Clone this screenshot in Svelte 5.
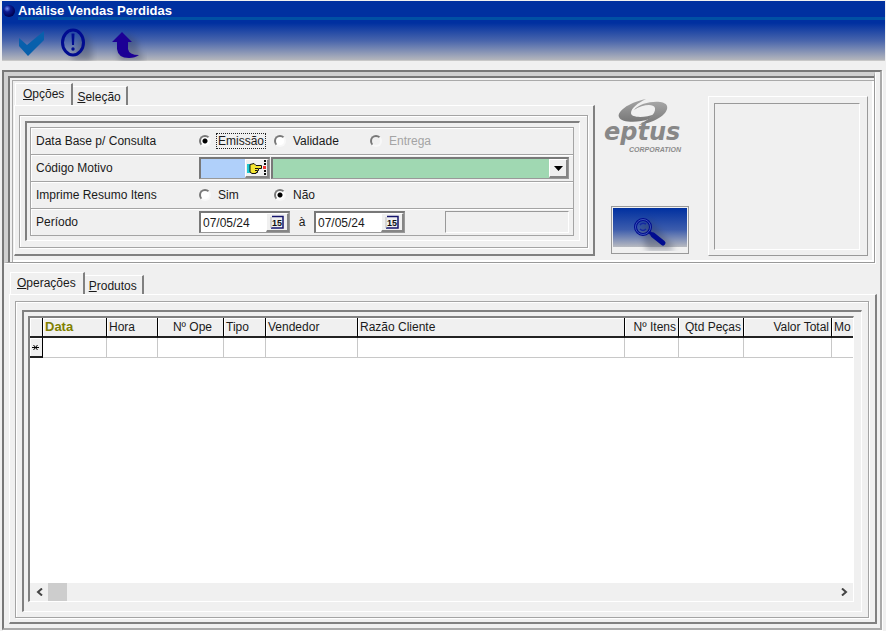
<script lang="ts">
  let dateBase = $state("emissao");
  let resumo = $state("nao");
  let codigo = $state("");
  let dateFrom = $state("07/05/24");
  let dateTo = $state("07/05/24");

  const columns = [
    { label: "Data", width: 64, sorted: true },
    { label: "Hora", width: 51 },
    { label: "Nº Ope", width: 66, right: true, pad: true },
    { label: "Tipo", width: 42 },
    { label: "Vendedor", width: 92 },
    { label: "Razão Cliente", width: 267 },
    { label: "Nº Itens", width: 54, right: true },
    { label: "Qtd Peças", width: 65, right: true },
    { label: "Valor Total", width: 88, right: true },
    { label: "Mo", width: 0 },
  ];
</script>

{#snippet calendar()}
  <svg width="14" height="14" viewBox="0 0 14 14" aria-hidden="true">
    <path d="M2 1.5H13V13H1" fill="none" stroke="#15156c" stroke-width="1.5" />
    <path d="M1 2V13" stroke="#bbb" />
    <text x="2" y="10.5" class="cal-text">15</text>
  </svg>
{/snippet}

<div class="page">
  <header>
    <div class="title-bar">
      <svg width="14" height="16" viewBox="0 0 14 16" aria-hidden="true">
        <defs>
          <radialGradient id="ball" cx="35%" cy="30%" r="70%">
            <stop offset="0" stop-color="#6e8cf0" />
            <stop offset="0.4" stop-color="#0a1a90" />
            <stop offset="1" stop-color="#000050" />
          </radialGradient>
        </defs>
        <circle cx="7" cy="10" r="6" fill="url(#ball)" />
      </svg>
      <h1>Análise Vendas Perdidas</h1>
    </div>
    <div class="toolbar">
      <button type="button" aria-label="Confirmar">
        <svg width="30" height="34" viewBox="0 0 30 34">
          <path d="M4 11L12 18L29 4V13L13 29L4 19Z" fill="#0860ac" />
        </svg>
      </button>
      <button type="button" aria-label="Informações">
        <svg width="38" height="34" viewBox="0 0 38 34">
          <path d="M12 34L24 6Q34 12 33 34Z" class="shade" />
          <ellipse cx="14" cy="15.5" rx="10.5" ry="12.5" fill="none" stroke="#000c90" stroke-width="3" />
          <path d="M12.5 6.5H15.5L15 18H13Z" fill="#000c90" />
          <circle cx="14" cy="22" r="1.7" fill="#000c90" />
        </svg>
      </button>
      <button type="button" aria-label="Sair">
        <svg width="36" height="34" viewBox="0 0 36 34">
          <path d="M8 34V17L17 7L27 15V22Q30 28 34 34Z" class="shade" />
          <path d="M1 15L11 5L21 15H17V22Q18 28 28 28Q24 31 18 31Q7 31 6 22V15Z" fill="#1c0095" />
        </svg>
      </button>
    </div>
  </header>

  <main>
    <section class="top-panel">
      <div class="options">
        <div class="tabs" role="tablist">
          <button type="button" role="tab" class="tab active" aria-selected="true"><u>O</u>pções</button>
          <button type="button" role="tab" class="tab" aria-selected="false"><u>S</u>eleção</button>
        </div>
        <div class="sheet">
          <div class="ridge">
            <div class="well">
              <form class="rows">
                <div class="row" role="radiogroup" aria-labelledby="lbl-base">
                  <span class="caption" id="lbl-base">Data Base p/ Consulta</span>
                  <label class="radio first">
                    <input type="radio" name="base" value="emissao" bind:group={dateBase} />
                    <span class="focus">Emissão</span>
                  </label>
                  <label class="radio second">
                    <input type="radio" name="base" value="validade" bind:group={dateBase} />
                    <span>Validade</span>
                  </label>
                  <label class="radio disabled">
                    <input type="radio" name="base" value="entrega" bind:group={dateBase} disabled />
                    <span>Entrega</span>
                  </label>
                </div>
                <div class="row">
                  <label class="caption" for="codigo">Código Motivo</label>
                  <div class="field code">
                    <input id="codigo" type="text" bind:value={codigo} />
                    <button type="button" aria-label="Procurar motivo">
                      <svg width="21" height="16" viewBox="0 0 21 16">
                        <path d="M1 4H4V13H1Z" fill="#20c8d0" />
                        <path d="M4 4.5L8 3.5L10 5.5H15.5V8.500H12.5V10.5H11.5V12.5H10V13.5H6L4 12Z" fill="#f4e430" stroke="#111" />
                        <path d="M9 8.5H12M9 10.5H11" stroke="#111" />
                        <path d="M18 0H20V2H18ZM18 3H20V5H18ZM18 10H20V12H18ZM18 13H20V15H18Z" fill="#111" />
                        <path d="M17 6H20V9H17Z" fill="#e33" />
                      </svg>
                    </button>
                  </div>
                  <div class="field combo">
                    <select aria-label="Descrição do motivo"><option></option></select>
                    <span class="drop" aria-hidden="true">
                      <svg width="9" height="5" viewBox="0 0 9 5"><path d="M0 0H9L4.5 5Z" fill="#000" /></svg>
                    </span>
                  </div>
                </div>
                <div class="row" role="radiogroup" aria-labelledby="lbl-resumo">
                  <span class="caption" id="lbl-resumo">Imprime Resumo Itens</span>
                  <label class="radio first">
                    <input type="radio" name="resumo" value="sim" bind:group={resumo} />
                    <span>Sim</span>
                  </label>
                  <label class="radio">
                    <input type="radio" name="resumo" value="nao" bind:group={resumo} />
                    <span>Não</span>
                  </label>
                </div>
                <div class="row">
                  <label class="caption" for="date-from">Período</label>
                  <div class="field date">
                    <input id="date-from" type="text" bind:value={dateFrom} />
                    <button type="button" aria-label="Calendário inicial">{@render calendar()}</button>
                  </div>
                  <label class="until" for="date-to">à</label>
                  <div class="field date">
                    <input id="date-to" type="text" bind:value={dateTo} />
                    <button type="button" aria-label="Calendário final">{@render calendar()}</button>
                  </div>
                  <div class="status"></div>
                </div>
              </form>
            </div>
          </div>
        </div>
      </div>

      <div class="brand">
        <svg width="88" height="58" viewBox="0 0 88 58" role="img" aria-label="eptus corporation">
          <defs>
            <linearGradient id="metal" x1="0" y1="0" x2="0" y2="1">
              <stop offset="0" stop-color="#a6a6a6" />
              <stop offset="1" stop-color="#777" />
            </linearGradient>
          </defs>
          <path d="M43 1C24 5 14 14 16 19C18 25 36 25 46 21L52 16C42 20 28 20 28 15C28 10 35 5 43 1Z" fill="url(#metal)" />
          <path d="M31 12C38 3 62 1 64 8C66 15 54 24 36 27C45 22 53 16 52 10C50 5 39 7 31 12Z" fill="url(#metal)" />
          <text x="1" y="42" class="logo-name">eptus</text>
          <text x="26" y="54" class="logo-sub">CORPORATION</text>
        </svg>
        <button type="button" class="search" aria-label="Pesquisar">
          <svg width="74" height="42" viewBox="0 0 74 42">
            <path d="M27 17L37 11L60 37V42H34Z" class="shade" />
            <circle cx="30" cy="18" r="7.5" fill="none" stroke="#000c90" stroke-width="3" />
            <circle cx="30" cy="18" r="7.5" fill="none" stroke="#3c55b8" stroke-width="1" />
            <path d="M27 16Q29 13 33 15M27 20Q30 23 33 20" fill="none" stroke="#1428a0" stroke-width="1.5" />
            <path d="M36 23L40 26" stroke="#000c90" stroke-width="3" />
            <path d="M40 26L50 34" stroke="#000c90" stroke-width="5" stroke-linecap="round" />
          </svg>
        </button>
      </div>

      <div class="preview"><div class="preview-inner"></div></div>
    </section>

    <section class="results">
      <div class="tabs" role="tablist">
        <button type="button" role="tab" class="tab active" aria-selected="true"><u>O</u>perações</button>
        <button type="button" role="tab" class="tab" aria-selected="false"><u>P</u>rodutos</button>
      </div>
      <div class="sheet">
        <div class="ridge">
          <div class="well">
            <div class="grid">
              <div class="table-area">
                <table>
                  <colgroup>
                    <col class="marker-col" />
                    {#each columns as column (column.label)}
                      <col style:width={column.width ? `${column.width}px` : null} />
                    {/each}
                  </colgroup>
                  <thead>
                    <tr>
                      <th></th>
                      {#each columns as column (column.label)}
                        <th scope="col" class:sorted={column.sorted} class:right={column.right} class:pad={column.pad}>
                          {column.label}
                        </th>
                      {/each}
                    </tr>
                  </thead>
                  <tbody>
                    <tr>
                      <th scope="row">
                        <svg width="7" height="7" viewBox="0 0 7 7" aria-label="Novo registro">
                          <path d="M0 3.5H7M1.5 1L5.5 6M5.5 1L1.5 6" stroke="#000" />
                        </svg>
                      </th>
                      {#each columns as column (column.label)}
                        <td></td>
                      {/each}
                    </tr>
                  </tbody>
                </table>
              </div>
              <div class="scrollbar">
                <button type="button" aria-label="Rolar à esquerda">
                  <svg width="7" height="8" viewBox="0 0 7 8"><path d="M6 0.5L2 4L6 7.5" /></svg>
                </button>
                <div class="thumb"></div>
                <button type="button" aria-label="Rolar à direita">
                  <svg width="7" height="8" viewBox="0 0 7 8"><path d="M1 0.5L5 4L1 7.5" /></svg>
                </button>
              </div>
            </div>
          </div>
        </div>
      </div>
    </section>
  </main>
</div>

<style>
  :global(body) {
    background: #f0f0f0;
  }
  .page,
  .page * {
    box-sizing: border-box;
  }
  .page {
    min-height: 100vh;
    padding: 1px 0 1px 2px;
    display: flex;
    flex-direction: column;
    font-family: "Liberation Sans", Arial, sans-serif;
    font-size: 12px;
    line-height: 16px;
    color: #1a1a1a;
  }
  button,
  input,
  select {
    margin: 0;
    padding: 0;
    border: none;
    border-radius: 0;
    background: transparent;
    font: inherit;
    color: inherit;
  }
  svg {
    display: block;
    flex-shrink: 0;
  }

  header {
    height: 60px;
    margin-right: 1px;
    background: linear-gradient(#0030a0 0, #0030a0 22px, #4a66ac 40px, #b4b6bc 100%);
    border-bottom: 1px solid #c8c8c8;
  }
  .title-bar {
    display: flex;
    gap: 2px;
    height: 19px;
  }
  h1 {
    flex: 1;
    margin: 0;
    height: 19px;
    font-size: 13px;
    line-height: 19px;
    font-weight: bold;
    color: #fff;
    border-bottom: 3px solid #0050a4;
  }
  .toolbar {
    display: flex;
    gap: 14px;
    padding: 7px 13px 0;
  }
  .shade {
    fill: #303850;
    opacity: 0.35;
    filter: blur(3px);
  }

  main {
    flex: 1;
    display: flex;
    flex-direction: column;
    margin: 9px 4px 0 0;
    border: 2px solid;
    border-color: #787878 #aaa #aaa #787878;
    box-shadow: 1px 1px 0 #fff;
  }

  .top-panel {
    display: flex;
    margin: 0 5px 0 0;
    padding: 7px 6px 6px 5px;
    border: solid;
    border-width: 4px 1px 1px 4px;
    border-color: #d0d0d0 #999 #999 #d0d0d0;
    box-shadow:
      1px 1px 0 #fff,
      inset 1px 1px 0 #777,
      inset 2px 2px 0 #777,
      inset 4px 4px 0 #f0f0f0,
      inset 5px 5px 0 #aaa,
      inset -2px -2px 0 #fff;
  }
  .options {
    flex: 1;
    min-width: 0;
    padding-left: 1px;
  }

  .tabs {
    display: flex;
    align-items: flex-end;
    height: 22px;
    padding-left: 1px;
  }
  .tab {
    height: 19px;
    padding: 2px 5px 0 4px;
    border-right: 2px solid #808080;
    border-top: 1px solid #fff;
    line-height: 16px;
    white-space: nowrap;
  }
  .tab.active {
    height: 22px;
    padding: 1px 7px 3px 7px;
    border-left: 1px solid #fff;
  }
  .results .tab.active {
    padding: 1px 7px 3px 6px;
  }
  .sheet {
    padding: 9px 5px 6px 4px;
    border: solid;
    border-width: 1px 2px 2px 1px;
    border-color: #fff #808080 #808080 #fff;
  }
  .ridge {
    padding: 5px 7px 6px 5px;
    border: 1px solid #a4a4a4;
    box-shadow:
      1px 1px 0 #fff,
      inset 1px 1px 0 #fff;
  }
  .well {
    padding: 4px 5px 4px 3px;
    border: solid;
    border-width: 2px 1px 1px 2px;
    border-color: #808080 #fff #fff #808080;
  }

  .rows {
    border: 1px solid #a4a4a4;
    border-bottom: none;
    box-shadow: inset 1px 1px 0 #fff;
  }
  .row {
    display: flex;
    align-items: center;
    height: 27px;
    padding: 0 4px 0 5px;
    border-bottom: 1px solid #a4a4a4;
    box-shadow: inset 0 1px 0 #fff;
  }
  .caption {
    width: 163px;
    flex-shrink: 0;
  }
  .radio {
    display: flex;
    align-items: center;
    gap: 6px;
  }
  .radio span {
    padding: 0 1px;
    line-height: 14px;
  }
  .radio.first {
    width: 75px;
  }
  .radio.second {
    width: 96px;
  }
  .radio.disabled {
    color: #a4a4a4;
  }
  .radio input {
    appearance: none;
    width: 12px;
    height: 12px;
    border: 2px solid;
    border-color: #787878 #f8f8f8 #f8f8f8 #787878;
    border-radius: 50%;
    background: #fff;
  }
  .radio input:checked {
    background: radial-gradient(circle, #000 0 2px, #fff 3px);
  }
  .radio input:disabled {
    background: #f0f0f0;
  }
  .focus {
    outline: 1px dotted #222;
  }

  .field {
    display: flex;
    height: 22px;
    border: solid;
    border-width: 2px 1px 1px 2px;
    border-color: #787878 #999 #999 #787878;
  }
  .field input {
    min-width: 0;
    flex: 1;
    padding-left: 2px;
    outline: none;
  }
  .field button,
  .drop {
    display: flex;
    align-items: center;
    justify-content: center;
    background: #f0f0f0;
    border: solid;
    border-width: 1px 2px 2px 1px;
    border-color: #fff #858585 #858585 #fff;
  }
  .code {
    width: 71px;
    background: #b0d0fa;
  }
  .code button {
    width: 24px;
  }
  .combo {
    position: relative;
    flex: 1;
    margin-left: 1px;
    background: #a0d8b2;
  }
  .combo select {
    appearance: none;
    width: 100%;
    outline: none;
  }
  .drop {
    position: absolute;
    top: 0;
    right: 0;
    bottom: 0;
    width: 19px;
    pointer-events: none;
  }
  .date {
    width: 91px;
    background: #fff;
  }
  .date button {
    width: 23px;
  }
  .until {
    width: 24px;
    text-align: center;
  }
  .status {
    flex: 1;
    height: 22px;
    margin-left: 40px;
    border: 1px solid;
    border-color: #999 #fff #fff #999;
  }
  .cal-text {
    font-size: 9px;
    font-weight: bold;
    fill: #111;
  }

  .brand {
    display: flex;
    flex-direction: column;
    align-items: flex-start;
    justify-content: space-between;
    width: 113px;
    padding: 15px 19px 2px 8px;
  }
  .logo-name {
    font: italic bold 24px "DejaVu Sans", sans-serif;
    fill: #888;
  }
  .logo-sub {
    font: italic bold 7px "Liberation Sans", sans-serif;
    fill: #8c8c8c;
  }
  .search {
    align-self: flex-end;
    width: 78px;
    height: 48px;
    padding: 1px;
    border: 1px solid #999;
    background: linear-gradient(#0030a0, #3c5cac 55%, #b8bac0) 1px 1px / 74px 39px no-repeat #f0f0f0;
    overflow: hidden;
  }
  .preview {
    width: 160px;
    margin-top: 13px;
    padding: 6px 7px 5px 5px;
    border: 1px solid;
    border-color: #fff #999 #999 #fff;
  }
  .preview-inner {
    height: 100%;
    border: 1px solid;
    border-color: #999 #fff #fff #999;
  }

  .results {
    flex: 1;
    display: flex;
    flex-direction: column;
    margin: 9px 3px 4px 5px;
  }
  .results .sheet,
  .results .ridge,
  .results .well {
    flex: 1;
    display: flex;
    flex-direction: column;
    min-width: 0;
  }
  .results .sheet {
    padding: 6px 6px 4px 5px;
  }
  .results .ridge {
    padding: 8px 6px 5px 6px;
  }
  .results .well {
    padding: 4px 7px 9px 4px;
  }
  .grid {
    flex: 1;
    display: flex;
    flex-direction: column;
    background: #fff;
    border: solid;
    border-width: 2px 1px 1px 2px;
    border-color: #808080 #fff #fff #808080;
  }
  .table-area {
    flex: 1;
    overflow: hidden;
  }
  table {
    width: 100%;
    table-layout: fixed;
    border-collapse: separate;
    border-spacing: 0;
  }
  .marker-col {
    width: 13px;
  }
  th {
    height: 20px;
    padding: 0 2px;
    background: #f0f0f0;
    border-right: 1px solid #000;
    border-bottom: 2px solid #222;
    box-shadow: inset 1px 1px 0 #fff;
    font-weight: normal;
    text-align: left;
    white-space: nowrap;
    overflow: hidden;
  }
  th.right {
    text-align: right;
  }
  th.pad {
    padding-right: 11px;
  }
  th.sorted {
    font-size: 13px;
    font-weight: bold;
    color: #808000;
  }
  thead th:last-child {
    border-right: none;
  }
  td {
    height: 20px;
    padding: 0;
    border-right: 1px solid #c8c8c8;
    border-bottom: 1px solid #c8c8c8;
  }
  td:last-child {
    border-right: none;
  }
  .scrollbar {
    display: flex;
    align-items: stretch;
    height: 18px;
    background: #f0f0f0;
  }
  .scrollbar button {
    display: flex;
    align-items: center;
    justify-content: center;
    width: 18px;
  }
  .scrollbar button:last-child {
    margin-left: auto;
  }
  .scrollbar path {
    fill: none;
    stroke: #444;
    stroke-width: 2;
  }
  .thumb {
    width: 19px;
    background: #cdcdcd;
  }
</style>
